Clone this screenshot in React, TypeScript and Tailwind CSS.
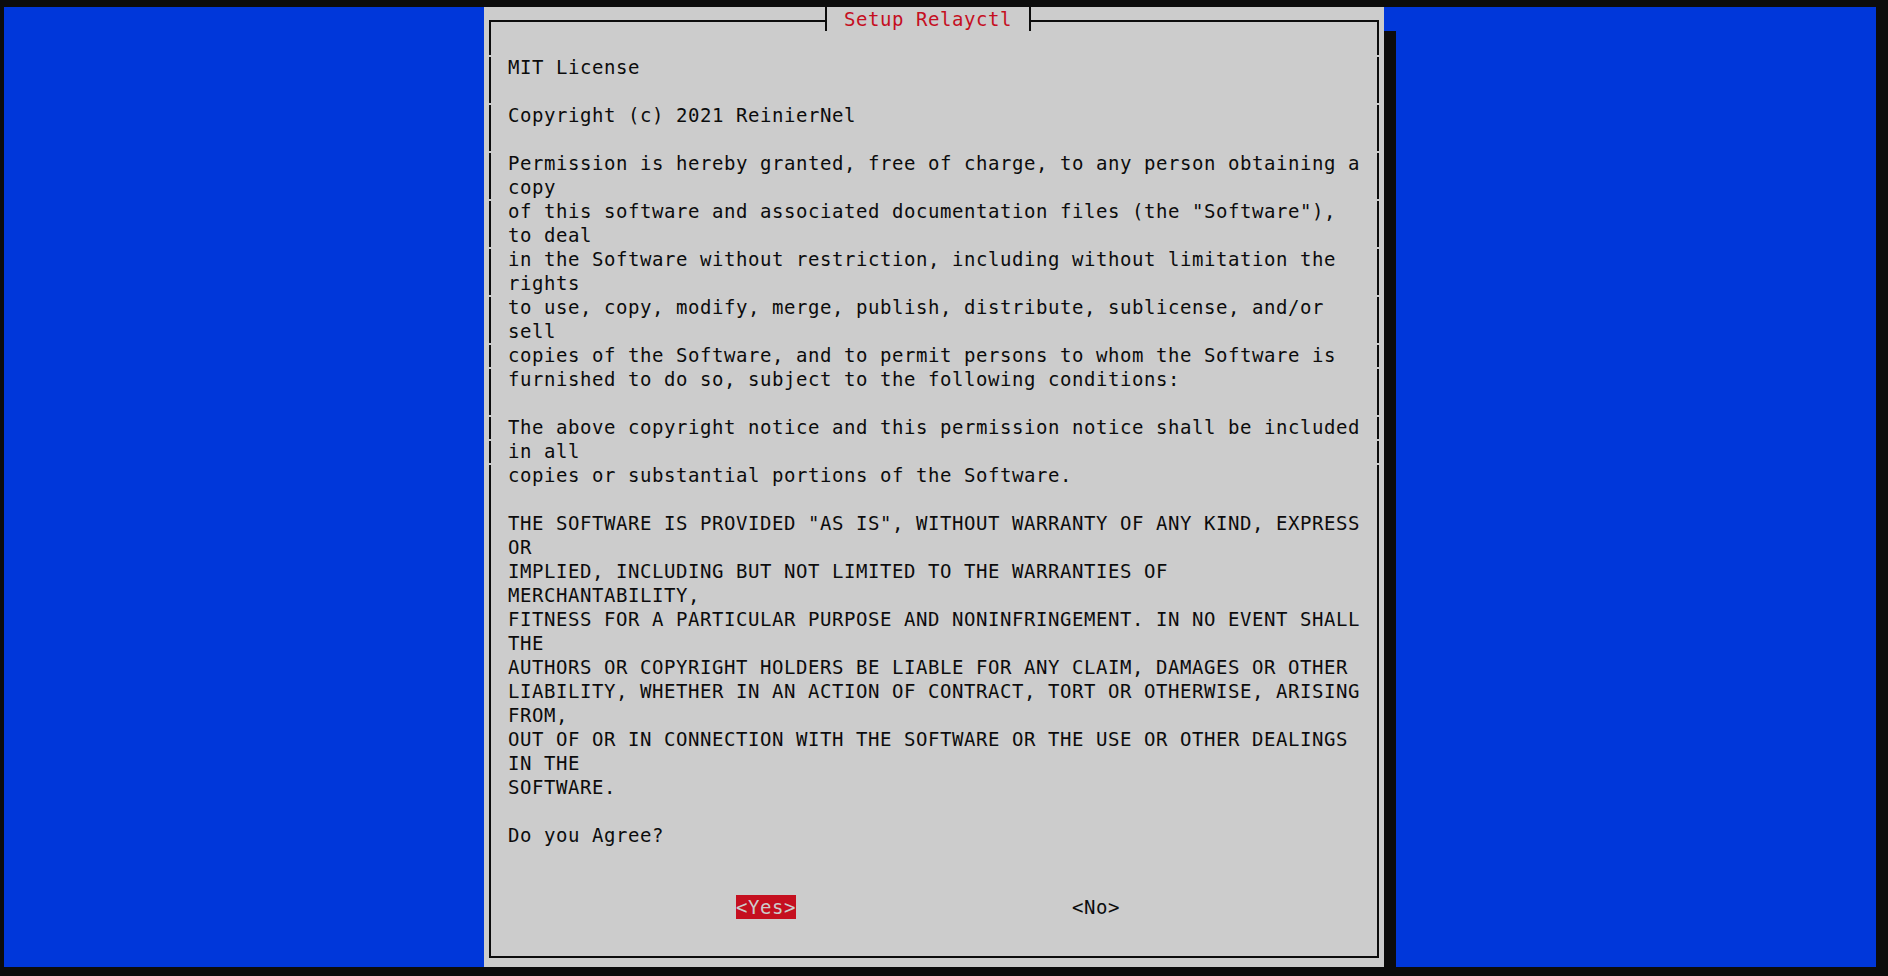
import React from "react";

const LINES: Record<number, string> = {
  2: "MIT License",
  4: "Copyright (c) 2021 ReinierNel",
  6: "Permission is hereby granted, free of charge, to any person obtaining a",
  7: "copy",
  8: 'of this software and associated documentation files (the "Software"),',
  9: "to deal",
  10: "in the Software without restriction, including without limitation the",
  11: "rights",
  12: "to use, copy, modify, merge, publish, distribute, sublicense, and/or",
  13: "sell",
  14: "copies of the Software, and to permit persons to whom the Software is",
  15: "furnished to do so, subject to the following conditions:",
  17: "The above copyright notice and this permission notice shall be included",
  18: "in all",
  19: "copies or substantial portions of the Software.",
  21: 'THE SOFTWARE IS PROVIDED "AS IS", WITHOUT WARRANTY OF ANY KIND, EXPRESS',
  22: "OR",
  23: "IMPLIED, INCLUDING BUT NOT LIMITED TO THE WARRANTIES OF",
  24: "MERCHANTABILITY,",
  25: "FITNESS FOR A PARTICULAR PURPOSE AND NONINFRINGEMENT. IN NO EVENT SHALL",
  26: "THE",
  27: "AUTHORS OR COPYRIGHT HOLDERS BE LIABLE FOR ANY CLAIM, DAMAGES OR OTHER",
  28: "LIABILITY, WHETHER IN AN ACTION OF CONTRACT, TORT OR OTHERWISE, ARISING",
  29: "FROM,",
  30: "OUT OF OR IN CONNECTION WITH THE SOFTWARE OR THE USE OR OTHER DEALINGS",
  31: "IN THE",
  32: "SOFTWARE.",
  34: "Do you Agree?",
};

const GAPS = new Set([2, 4, 6, 8, 10, 12, 14, 15, 17, 18, 19]);

function Row({ i, children }: { i: number; children?: React.ReactNode }) {
  const gap = GAPS.has(i);
  const line = gap ? "w-[2px] bg-[#0c0c0c] mt-[2px]" : "w-[2px] bg-[#0c0c0c]";
  return (
    <div className="flex h-[24px]">
      <div className="w-[5px]" />
      <div className={line} />
      <div className="flex-1 pl-[17px] whitespace-pre leading-[24px] text-[#0c0c0c]">
        {children}
      </div>
      <div className={line} />
      <div className="w-[5px]" />
    </div>
  );
}

function Dialog() {
  const rows: React.ReactNode[] = [];
  for (let i = 1; i <= 38; i++) {
    if (i === 37) {
      rows.push(
        <Row key={i} i={i}>
          {"                   "}
          <span className="inline-block h-[24px] bg-[#c50f1f] text-[#cccccc]">{"<Yes>"}</span>
          {"                       "}
          {"<No>"}
        </Row>
      );
    } else {
      rows.push(
        <Row key={i} i={i}>
          {LINES[i] ?? ""}
        </Row>
      );
    }
  }
  return (
    <div className="flex flex-col w-[900px] h-[960px] bg-[#cccccc]">
      {/* top border with title */}
      <div className="flex h-[24px]">
        <div className="w-[5px]" />
        <div className="w-[336px] mt-[13px] border-t-2 border-l-2 border-[#0c0c0c]" />
        <div className="w-[2px] bg-[#0c0c0c]" />
        <div className="w-[202px] pl-[17px] whitespace-pre leading-[24px] text-[#c50f1f]">
          Setup Relayctl
        </div>
        <div className="w-[2px] bg-[#0c0c0c]" />
        <div className="w-[348px] mt-[13px] border-t-2 border-r-2 border-[#0c0c0c]" />
        <div className="w-[5px]" />
      </div>
      {rows}
      {/* bottom border */}
      <div className="flex h-[24px]">
        <div className="w-[5px]" />
        <div className="flex-1 h-[15px] border-l-2 border-r-2 border-b-2 border-[#0c0c0c]" />
        <div className="w-[5px]" />
      </div>
    </div>
  );
}

export default function App() {
  return (
    <div className="w-[1888px] h-[976px] bg-[#0c0c0c] pt-[7px] pl-[4px] overflow-hidden font-['DejaVu_Sans_Mono','Liberation_Mono',monospace] text-[19px] tracking-[0.561px]">
      <div className="flex w-[1872px] h-[960px]">
        <div className="w-[480px] bg-[#0037da]" />
        <Dialog />
        <div className="flex flex-col w-[12px]">
          <div className="h-[24px] bg-[#0037da]" />
          <div className="flex-1 bg-[#0c0c0c]" />
        </div>
        <div className="w-[480px] bg-[#0037da]" />
      </div>
    </div>
  );
}
